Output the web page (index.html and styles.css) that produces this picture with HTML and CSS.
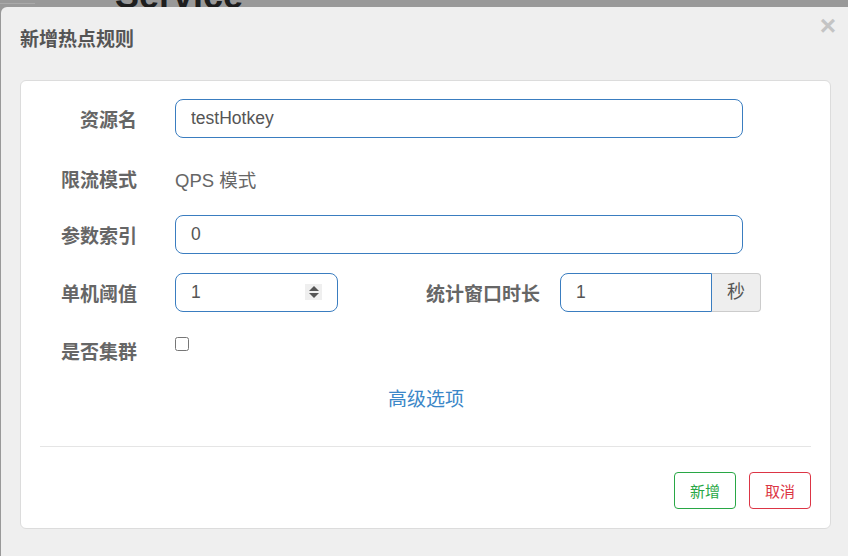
FILE: index.html
```html
<!DOCTYPE html>
<html lang="zh-CN">
<head>
    <meta charset="UTF-8">
    <title>新增热点规则</title>
    <link rel="stylesheet" href="styles.css">
</head>
<body>
    <div class="page">
        <div class="page-line"></div>
        <h1 class="page-title">Service</h1>
    </div>

    <div class="dialog">
        <div class="dialog-header">
            <h3>新增热点规则</h3>
            <span class="close">×</span>
        </div>
        <div class="card">
            <form class="rule-form">
                <div class="form-row">
                    <label class="label">资源名</label>
                    <input class="input input-wide" type="text" value="testHotkey">
                </div>
                <div class="form-row">
                    <label class="label label-static">限流模式</label>
                    <span class="static-text">QPS 模式</span>
                </div>
                <div class="form-row">
                    <label class="label">参数索引</label>
                    <input class="input input-wide" type="text" value="0">
                </div>
                <div class="form-row">
                    <label class="label">单机阈值</label>
                    <div class="number-box">
                        <input class="input input-number" type="text" value="1">
                        <span class="spinner">
                            <span class="arrow-up"></span>
                            <span class="arrow-down"></span>
                        </span>
                    </div>
                    <label class="label label-long">统计窗口时长</label>
                    <div class="input-group">
                        <input class="input input-grouped" type="text" value="1">
                        <span class="addon">秒</span>
                    </div>
                </div>
                <div class="form-row form-row-last">
                    <label class="label">是否集群</label>
                    <input class="check" type="checkbox">
                </div>
                <div class="advanced"><a href="#">高级选项</a></div>
            </form>
            <div class="card-footer">
                <button type="button" class="btn btn-add">新增</button>
                <button type="button" class="btn btn-cancel">取消</button>
            </div>
        </div>
    </div>
</body>
</html>
```

FILE: styles.css
```css
body {
    margin: 0;
    width: 848px;
    height: 556px;
    overflow: hidden;
    background-color: #999;
    font-family: "Liberation Sans", "Noto Sans CJK SC", sans-serif;
    position: relative;
}
.page {
    height: 7px;
    overflow: hidden;
    position: relative;
}
.page-line {
    width: 35px;
    height: 1px;
    margin-top: 3px;
    background-color: #aaa;
}
.page-title {
    margin: -26px 0 0 115px;
    font-size: 36px;
    font-weight: bold;
    line-height: 36px;
    color: #1e1e1e;
}
.dialog {
    position: absolute;
    top: 7px;
    left: 1px;
    right: 0;
    bottom: 0;
    background-color: #efefef;
    border-radius: 6px 0 0 0;
    padding-left: 19px;
    box-sizing: border-box;
}
.dialog-header {
    height: 73px;
    display: flex;
    justify-content: space-between;
    align-items: flex-start;
    padding-right: 12px;
}
.dialog-header h3 {
    margin: 21px 0 0 0;
    font-size: 19px;
    line-height: 24px;
    font-weight: bold;
    color: #555;
}
.close {
    margin-top: 5px;
    font-size: 28px;
    font-weight: bold;
    line-height: 28px;
    color: #c4c4c4;
}
.card {
    width: 811px;
    box-sizing: border-box;
    background-color: white;
    border: 1px solid #dcdcdc;
    border-radius: 6px;
    padding: 18px 0 19px 0;
}
.form-row {
    display: flex;
    align-items: flex-start;
    height: 58px;
}
.form-row-last {
    height: 50px;
}
.label {
    width: 116px;
    margin-right: 38px;
    padding-top: 10px;
    text-align: right;
    font-size: 19px;
    line-height: 24px;
    font-weight: bold;
    color: #666;
    flex-shrink: 0;
}
.label-static {
    padding-top: 12px;
}
.label-long {
    width: 202px;
    margin-right: 20px;
}
.static-text {
    padding-top: 12px;
    font-size: 18.5px;
    line-height: 24px;
    color: #666;
}
.input {
    height: 39px;
    box-sizing: border-box;
    border: 1px solid #3a7dc0;
    border-radius: 8px;
    padding: 0 15px;
    font-family: "Liberation Sans", "Noto Sans CJK SC", sans-serif;
    font-size: 17.5px;
    color: #555;
    background-color: white;
    outline: none;
}
.input-wide {
    width: 568px;
}
.number-box {
    position: relative;
}
.input-number {
    width: 163px;
}
.spinner {
    position: absolute;
    top: 11px;
    right: 16px;
    width: 17px;
    height: 16px;
    background-color: #efefef;
    display: flex;
    flex-direction: column;
    align-items: center;
    justify-content: center;
    gap: 2px;
}
.arrow-up {
    width: 0;
    height: 0;
    border-left: 5px solid transparent;
    border-right: 5px solid transparent;
    border-bottom: 5px solid #555;
}
.arrow-down {
    width: 0;
    height: 0;
    border-left: 5px solid transparent;
    border-right: 5px solid transparent;
    border-top: 5px solid #555;
}
.input-group {
    display: flex;
}
.input-grouped {
    width: 152px;
    border-radius: 8px 0 0 8px;
}
.addon {
    width: 49px;
    height: 39px;
    box-sizing: border-box;
    border: 1px solid #ccc;
    border-left: none;
    border-radius: 0 4px 4px 0;
    background-color: #eee;
    color: #555;
    font-size: 18px;
    line-height: 37px;
    text-align: center;
}
.check {
    width: 14px;
    height: 14px;
    margin: 6px 0 0 0;
}
.advanced {
    margin-top: 7px;
    text-align: center;
    font-size: 19px;
    line-height: 24px;
}
.advanced a {
    color: #3b87c8;
    text-decoration: none;
    margin-left: 1px;
}
.card-footer {
    margin: 34px 19px 0 19px;
    border-top: 1px solid #e5e5e5;
    padding-top: 25px;
    display: flex;
    justify-content: flex-end;
    gap: 13px;
}
.btn {
    width: 62px;
    height: 37px;
    background-color: white;
    border-radius: 4px;
    font-family: "Liberation Sans", "Noto Sans CJK SC", sans-serif;
    font-size: 15px;
    cursor: pointer;
}
.btn-add {
    border: 1px solid #28a745;
    color: #28a745;
}
.btn-cancel {
    border: 1px solid #dc3545;
    color: #dc3545;
}
```
